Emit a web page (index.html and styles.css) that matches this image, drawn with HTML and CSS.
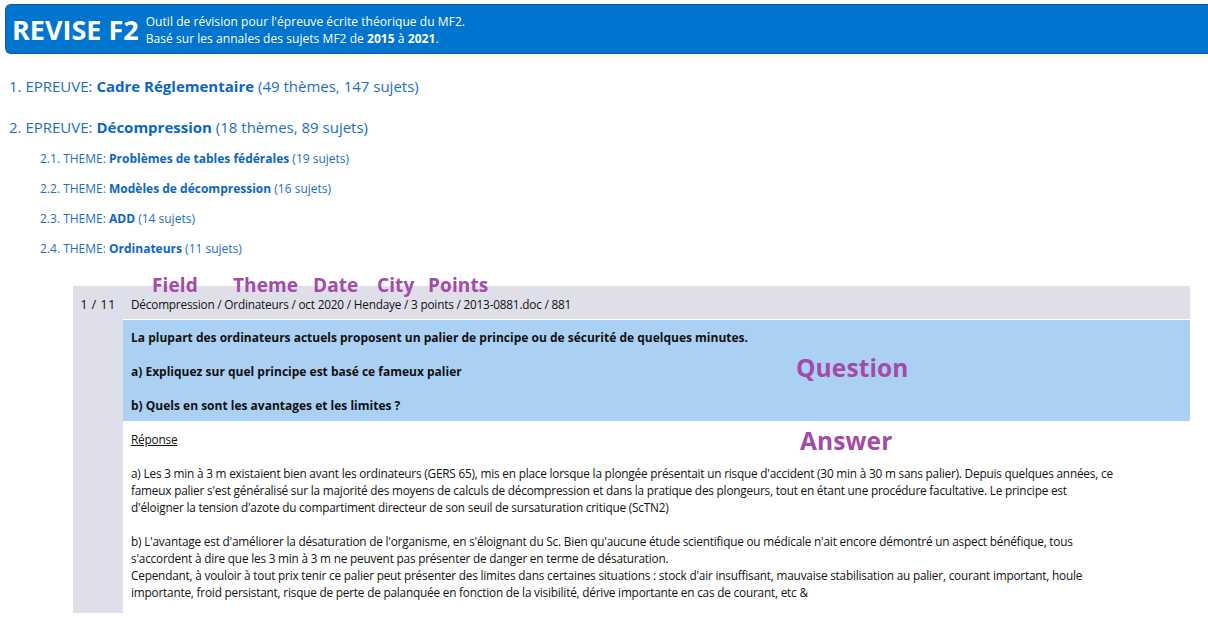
FILE: index.html
```html
<!DOCTYPE html>
<html lang="fr">
<head>
<meta charset="utf-8">
<title>REVISE F2</title>
<link rel="stylesheet" href="styles.css">
</head>
<body>
<header class="banner">
  <h1 class="brand">REVISE F2</h1>
  <div class="tagline">
    <div>Outil de révision pour l'épreuve écrite théorique du MF2.</div>
    <div>Basé sur les annales des sujets MF2 de <b>2015</b> à <b>2021</b>.</div>
  </div>
</header>

<main class="content">
  <div class="epreuve">1. EPREUVE: <b>Cadre Réglementaire</b> (49 thèmes, 147 sujets)</div>
  <div class="epreuve">2. EPREUVE: <b>Décompression</b> (18 thèmes, 89 sujets)</div>
  <ul class="themes">
    <li>2.1. THEME: <b>Problèmes de tables fédérales</b> (19 sujets)</li>
    <li>2.2. THEME: <b>Modèles de décompression</b> (16 sujets)</li>
    <li>2.3. THEME: <b>ADD</b> (14 sujets)</li>
    <li>2.4. THEME: <b>Ordinateurs</b> (11 sujets)</li>
  </ul>

  <section class="card">
    <div class="card-index">1 / 11</div>
    <div class="card-body">
      <div class="card-meta">Décompression / Ordinateurs / oct 2020 / Hendaye / 3 points / 2013-0881.doc / 881</div>
      <div class="question">
        <p>La plupart des ordinateurs actuels proposent un palier de principe ou de sécurité de quelques minutes.</p>
        <p>a) Expliquez sur quel principe est basé ce fameux palier</p>
        <p>b) Quels en sont les avantages et les limites ?</p>
      </div>
      <div class="answer">
        <p><u>Réponse</u></p>
        <p>a) Les 3 min à 3 m existaient bien avant les ordinateurs (GERS 65), mis en place lorsque la plongée présentait un risque d'accident (30 min à 30 m sans palier). Depuis quelques années, ce<br>fameux palier s'est généralisé sur la majorité des moyens de calculs de décompression et dans la pratique des plongeurs, tout en étant une procédure facultative. Le principe est<br>d'éloigner la tension d'azote du compartiment directeur de son seuil de sursaturation critique (ScTN2)</p>
        <p>b) L'avantage est d'améliorer la désaturation de l'organisme, en s'éloignant du Sc. Bien qu'aucune étude scientifique ou médicale n'ait encore démontré un aspect bénéfique, tous<br>s'accordent à dire que les 3 min à 3 m ne peuvent pas présenter de danger en terme de désaturation.<br>Cependant, à vouloir à tout prix tenir ce palier peut présenter des limites dans certaines situations : stock d'air insuffisant, mauvaise stabilisation au palier, courant important, houle<br>importante, froid persistant, risque de perte de palanquée en fonction de la visibilité, dérive importante en cas de courant, etc &amp;</p>
      </div>
    </div>
    <span class="note note-field">Field</span>
    <span class="note note-theme">Theme</span>
    <span class="note note-date">Date</span>
    <span class="note note-city">City</span>
    <span class="note note-points">Points</span>
    <span class="note note-big note-question">Question</span>
    <span class="note note-big note-answer">Answer</span>
  </section>
</main>
</body>
</html>
```

FILE: styles.css
```css
html, body {
  margin: 0;
  padding: 0;
  background: #ffffff;
  overflow-x: hidden;
}

body {
  font-family: "Open Sans", "Noto Sans", "Liberation Sans", sans-serif;
  color: #111;
}

.banner {
  display: flex;
  align-items: center;
  gap: 7px;
  margin: 4px 0 0 5px;
  height: 48px;
  padding: 0 7px 0 6px;
  background: #0075cf;
  border: 1px solid #1f4fae;
  border-right: none;
  border-radius: 6px 0 0 6px;
  color: #fff;
}

.brand {
  margin: 0;
  font-size: 27px;
  font-weight: 700;
  letter-spacing: 0;
  line-height: 1;
}

.tagline {
  font-size: 12px;
  line-height: 17px;
  letter-spacing: 0.05px;
  margin-top: 1px;
}

.content {
  padding-left: 9px;
}

.epreuve {
  font-size: 15px;
  color: #1b6ec8;
  letter-spacing: 0;
  line-height: 20px;
  margin-top: 21px;
}

.epreuve:first-child {
  margin-top: 22px;
}

.epreuve b {
  color: #0a66c5;
}

.themes {
  list-style: none;
  margin: 0;
  padding: 0 0 0 31px;
}

.themes li {
  font-size: 12px;
  color: #1b6ec8;
  line-height: 16px;
  margin-top: 14px;
  letter-spacing: 0;
}

.themes li:first-child {
  margin-top: 14px;
}

.themes b {
  color: #0a66c5;
}

.card {
  position: relative;
  display: flex;
  margin: 29px 18px 0 64px;
  background: #fff;
}

.card-index {
  width: 50px;
  flex: none;
  background: #dfdfe9;
  font-size: 13px;
  line-height: 17px;
  text-align: center;
  padding-top: 10px;
  letter-spacing: 0.3px;
}

.card-body {
  flex: 1;
  font-size: 11.8px;
  letter-spacing: -0.2px;
}

.card-meta {
  background: #dfdfe9;
  height: 23px;
  line-height: 17px;
  padding: 10px 0 0 8px;
  border-bottom: 1px solid #fff;
}

.question {
  background: #aad0f4;
  padding: 9px 50px 7px 8px;
  font-weight: 700;
  font-size: 12px;
  letter-spacing: 0;
  line-height: 17px;
}

.question p {
  margin: 0;
}

.question p + p {
  margin-top: 17px;
}

.answer {
  padding: 10px 10px 12px 8px;
  font-size: 11.8px;
  line-height: 17px;
}

.answer p {
  margin: 0 0 17px;
}

.answer p:last-child {
  margin-bottom: 0;
}

.note {
  position: absolute;
  color: #a44aa8;
  font-weight: 700;
  font-size: 19px;
  line-height: 1;
  letter-spacing: 0.1px;
}

.note-field { left: 79px; top: -10px; }
.note-theme { left: 160px; top: -10px; }
.note-date { left: 240px; top: -10px; }
.note-city { left: 304px; top: -10px; }
.note-points { left: 355px; top: -10px; }

.note-big {
  font-size: 24.5px;
}

.note-question { left: 723px; top: 70px; }
.note-answer { left: 727px; top: 143px; }
```
